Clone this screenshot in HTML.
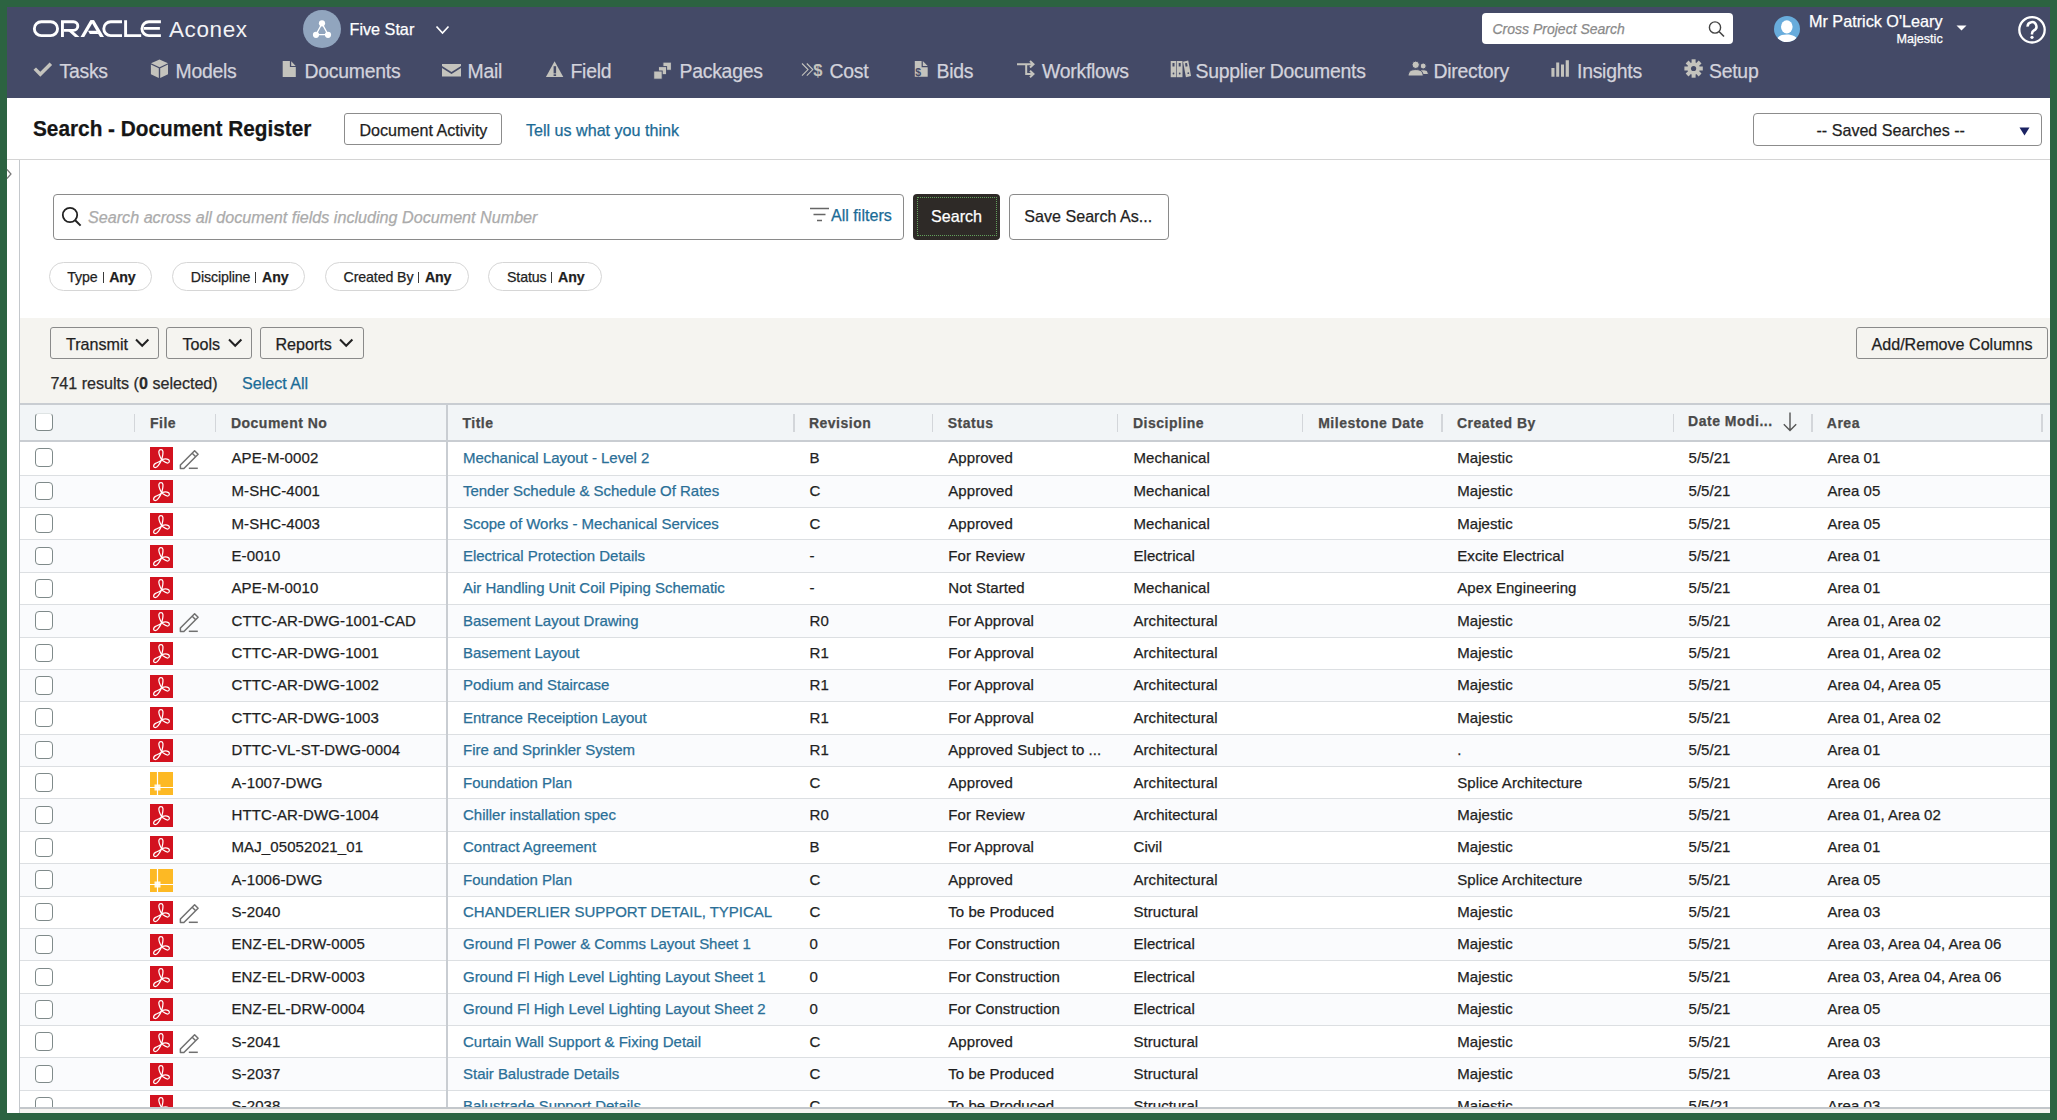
<!DOCTYPE html>
<html><head><meta charset="utf-8"><title>Search - Document Register</title>
<style>
html,body{margin:0;padding:0;}
body{width:2057px;height:1120px;overflow:hidden;position:relative;background:#2c6341;font-family:"Liberation Sans", sans-serif;}
.t{position:absolute;line-height:1;white-space:nowrap;-webkit-text-stroke:0.25px currentColor;}
.r{position:absolute;box-sizing:border-box;}
svg{position:absolute;overflow:visible;}
</style></head>
<body>
<div class="r" style="left:7px;top:7px;width:2043px;height:1106px;background:#ffffff;"></div>
<div class="r" style="left:7px;top:7px;width:2043px;height:91px;background:#444a67;"></div>
<svg style="left:0;top:0" width="300" height="50" viewBox="0 0 300 50">
<g fill="none" stroke="#fff" stroke-width="2.9">
<rect x="34.35" y="21.75" width="23.2" height="13.9" rx="6.95" ry="6.95"/>
<path d="M62.45 37.1V21.75H73.5A4.3 4.3 0 0 1 73.5 30.35H64"/>
<path d="M122 21.75H110.75A6.95 6.95 0 0 0 110.75 35.65H122"/>
<path d="M125.6 20.3V35.65H141.2"/>
<path d="M160.9 21.75H148.9A6.95 6.95 0 0 0 148.9 35.65H160.9M143.9 28.4H159.9"/>
</g>
<g fill="#fff">
<path d="M66 28.9H70.5L79.5 37.1H75Z"/>
<path d="M90.3 20.3H94.1L84.2 37.1H80.5Z"/>
<path d="M90.3 20.3H94.1L104 37.1H100Z"/>
<path d="M88 30.7H96.7L98.7 34H89.8Z"/>
</g></svg>
<div class="t" style="left:169.0px;top:19.00px;font-size:22.5px;color:#f2f2f6;font-weight:400;font-style:normal;letter-spacing:0.6px;-webkit-text-stroke:0;">Aconex</div>
<div class="r" style="left:303px;top:9.5px;width:38px;height:38px;background:#91a5be;border-radius:50%;"></div>
<svg style="left:303px;top:9.5px" width="38" height="38" viewBox="0 0 38 38">
<g stroke="#fff" stroke-width="1.3" fill="none"><path d="M19 13.5L13 24.7H25Z"/></g>
<g fill="#fff"><circle cx="19" cy="13.3" r="3.1"/><circle cx="13" cy="24.8" r="3.1"/><circle cx="25" cy="24.8" r="3.1"/></g>
</svg><div class="t" style="left:349.5px;top:21.00px;font-size:16.2px;color:#ffffff;font-weight:400;font-style:normal;letter-spacing:0px;">Five Star</div>
<svg style="left:435px;top:25px" width="16" height="10" viewBox="0 0 16 10"><path d="M1.5 1.5L7.5 8L13.5 1.5" fill="none" stroke="#fff" stroke-width="1.7"/></svg>
<div class="r" style="left:1482px;top:13px;width:251px;height:31px;background:#fff;border-radius:4px;"></div>
<div class="t" style="left:1492.5px;top:22.00px;font-size:14px;color:#8a8a8a;font-weight:400;font-style:italic;letter-spacing:0px;">Cross Project Search</div>
<svg style="left:1707px;top:19px" width="20" height="20" viewBox="0 0 20 20"><circle cx="8" cy="8.5" r="5.6" fill="none" stroke="#444" stroke-width="1.4"/><path d="M12 12.5L17 17.5" stroke="#444" stroke-width="1.6"/></svg>
<div class="r" style="left:1774px;top:15.5px;width:26px;height:26px;background:#68acdc;border-radius:50%;overflow:hidden;"></div>
<svg style="left:1774px;top:15.5px" width="26" height="26" viewBox="0 0 26 26"><defs><clipPath id="uc"><circle cx="13" cy="13" r="13"/></clipPath></defs><g clip-path="url(#uc)" fill="#fff"><ellipse cx="12.8" cy="10.8" rx="5.8" ry="6.6"/><path d="M1.5 26C2.5 20.5 7 18.6 12.8 18.6S23.5 20.5 24.5 26Z"/></g></svg>
<div class="t" style="left:1809.0px;top:13.00px;font-size:16.2px;color:#ffffff;font-weight:400;font-style:normal;letter-spacing:0px;">Mr Patrick O'Leary</div>
<div class="t" style="left:1896.5px;top:33.00px;font-size:12.6px;color:#ffffff;font-weight:400;font-style:normal;letter-spacing:0px;">Majestic</div>
<svg style="left:1956px;top:25px" width="11" height="6" viewBox="0 0 11 6"><path d="M0.5 0.5H10.5L5.5 5.5Z" fill="#fff"/></svg>
<svg style="left:2017px;top:14.5px" width="30" height="30" viewBox="0 0 30 30"><circle cx="15" cy="14.8" r="12.7" fill="none" stroke="#fff" stroke-width="2.3"/><path d="M10.6 11.6a4.4 4.4 0 1 1 6.4 3.8c-1.4.8-2 1.6-2 3.2v.8" fill="none" stroke="#fff" stroke-width="2.5"/><circle cx="15" cy="22.3" r="1.6" fill="#fff"/></svg>
<div class="t" style="left:59.5px;top:62.00px;font-size:19.4px;color:#d3d3dc;font-weight:400;font-style:normal;letter-spacing:-0.25px;">Tasks</div>
<div class="t" style="left:175.5px;top:62.00px;font-size:19.4px;color:#d3d3dc;font-weight:400;font-style:normal;letter-spacing:-0.25px;">Models</div>
<div class="t" style="left:304.5px;top:62.00px;font-size:19.4px;color:#d3d3dc;font-weight:400;font-style:normal;letter-spacing:-0.25px;">Documents</div>
<div class="t" style="left:467.5px;top:62.00px;font-size:19.4px;color:#d3d3dc;font-weight:400;font-style:normal;letter-spacing:-0.25px;">Mail</div>
<div class="t" style="left:570.5px;top:62.00px;font-size:19.4px;color:#d3d3dc;font-weight:400;font-style:normal;letter-spacing:-0.25px;">Field</div>
<div class="t" style="left:679.5px;top:62.00px;font-size:19.4px;color:#d3d3dc;font-weight:400;font-style:normal;letter-spacing:-0.25px;">Packages</div>
<div class="t" style="left:829.5px;top:62.00px;font-size:19.4px;color:#d3d3dc;font-weight:400;font-style:normal;letter-spacing:-0.25px;">Cost</div>
<div class="t" style="left:936.5px;top:62.00px;font-size:19.4px;color:#d3d3dc;font-weight:400;font-style:normal;letter-spacing:-0.25px;">Bids</div>
<div class="t" style="left:1042.0px;top:62.00px;font-size:19.4px;color:#d3d3dc;font-weight:400;font-style:normal;letter-spacing:-0.25px;">Workflows</div>
<div class="t" style="left:1195.5px;top:62.00px;font-size:19.4px;color:#d3d3dc;font-weight:400;font-style:normal;letter-spacing:-0.25px;">Supplier Documents</div>
<div class="t" style="left:1433.5px;top:62.00px;font-size:19.4px;color:#d3d3dc;font-weight:400;font-style:normal;letter-spacing:-0.25px;">Directory</div>
<div class="t" style="left:1577.0px;top:62.00px;font-size:19.4px;color:#d3d3dc;font-weight:400;font-style:normal;letter-spacing:-0.25px;">Insights</div>
<div class="t" style="left:1709.0px;top:62.00px;font-size:19.4px;color:#d3d3dc;font-weight:400;font-style:normal;letter-spacing:-0.25px;">Setup</div>

<svg style="left:0;top:0" width="2057" height="98" viewBox="0 0 2057 98">
<g fill="#c4c3bd" stroke="none">
<path d="M33.5 69.8L36 67.4L40.3 71.7L49.6 62.4L52.1 64.9L40.3 76.7Z"/>
<path d="M159.5 59.4L168 63.3L159.5 67.2L151 63.3Z"/>
<path d="M150.9 64.5L158.8 68.3V78L150.9 74.2Z"/>
<path d="M160.2 68.3L168 64.5V74.2L160.2 78Z"/>
<path d="M282.7 61H289.9V66.9H295.8V77H282.7Z"/><path d="M291.2 61.3L295.7 65.9H291.2Z"/>
<path d="M442 64H461V66L451.5 72L442 66Z"/>
<path d="M442 68L451.5 74L461 68V76.5H442Z"/>
<path d="M554.6 61.3L563.3 76.9H545.9Z"/>
<path d="M914.8 61.1H921.6V67.2H927.7V76.8H914.8Z"/>
<path d="M922.8 61.1L927.7 66H922.8Z"/>
<path d="M1551.4 68.1H1554.5V76.7H1551.4ZM1556.2 62.4H1559.2V76.7H1556.2ZM1561 64.6H1564V76.7H1561ZM1565.7 60.2H1568.9V76.7H1565.7Z"/>
</g>
<g fill="#444a67"><rect x="553.6" y="66.2" width="2.5" height="7.2"/><rect x="553.6" y="74.3" width="2.5" height="1.7"/></g>
<g fill="#c4c3bd" stroke="#444a67" stroke-width="1">
<rect x="662.9" y="62.1" width="8.5" height="8.2"/>
<rect x="658.4" y="66.6" width="8.2" height="8.1"/>
<rect x="653.7" y="71" width="8.5" height="8.2"/>
<circle cx="1423.2" cy="66" r="3"/><path d="M1417.5 74.5C1418 70.5 1420.5 69.8 1423.2 69.8S1428 70.5 1428.4 74.5Z"/>
<circle cx="1415.7" cy="64.8" r="3.7"/><path d="M1408 76C1408.5 71 1411 69.6 1415.7 69.6S1422.8 71 1423.3 76Z"/>
</g>
<g fill="#c4c3bd">
<rect x="1170.7" y="61" width="5.6" height="16.2"/>
<rect x="1176.9" y="61" width="5.6" height="16.2"/>
<path d="M1183 61.8L1188.2 60.6L1191.1 76L1185.9 77.2Z"/>
</g>
<g fill="#444a67">
<rect x="1172.5" y="63" width="2" height="3.5"/><rect x="1178.7" y="63" width="2" height="3.5"/><path d="M1185 63.3L1187 62.9L1187.6 66.3L1185.6 66.7Z"/>
<circle cx="1173.5" cy="73.5" r="0.9"/><circle cx="1179.7" cy="73.5" r="0.9"/><circle cx="1188.3" cy="73.2" r="0.9"/>
</g>
<g fill="none" stroke="#c4c3bd">
<path d="M802 63.5L808 69.6L802 75.7M806.8 63.5L812.8 69.6L806.8 75.7" stroke-width="1.1"/>
<path d="M1017 64.3H1033M1026.2 64.3V74H1033M1030 61L1033.5 64.3L1030 67.6M1030 70.7L1033.5 74L1030 77.3" stroke-width="2"/>
</g>
<text x="813.2" y="75.8" font-family="Liberation Sans" font-weight="700" font-size="16.5" fill="#c4c3bd">$</text>
<text x="915.3" y="75.6" font-family="Liberation Sans" font-weight="700" font-size="10.5" fill="#444a67">$</text>
<g transform="translate(1693.6 68.5)" fill="#c4c3bd">
<circle r="6.2"/>
<rect x="-2" y="-9.2" width="4" height="4"/><rect x="-2" y="5.2" width="4" height="4"/><rect x="-9.2" y="-2" width="4" height="4"/><rect x="5.2" y="-2" width="4" height="4"/>
<g transform="rotate(45)"><rect x="-2" y="-9.2" width="4" height="4"/><rect x="-2" y="5.2" width="4" height="4"/><rect x="-9.2" y="-2" width="4" height="4"/><rect x="5.2" y="-2" width="4" height="4"/></g>
<circle r="2.6" fill="#444a67"/>
</g>
</svg>
<div class="r" style="left:7px;top:159px;width:2043px;height:1px;background:#d4d4d4;"></div>
<div class="t" style="left:33.3px;top:118.00px;font-size:22.5px;color:#161616;font-weight:700;font-style:normal;letter-spacing:0px;transform:scaleX(0.924);transform-origin:0 0;">Search - Document Register</div>
<div class="r" style="left:344px;top:113px;width:158px;height:32px;border:1.3px solid #8c8c8c;border-radius:3px;background:#fff;"></div>
<div class="t" style="left:359.5px;top:122.00px;font-size:16.1px;color:#1f1f1f;font-weight:400;font-style:normal;letter-spacing:0px;">Document Activity</div>
<div class="t" style="left:526.0px;top:122.00px;font-size:16.1px;color:#1b6b96;font-weight:400;font-style:normal;letter-spacing:0px;">Tell us what you think</div>
<div class="r" style="left:1753px;top:113px;width:289px;height:33px;border:1.4px solid #8c8c8c;border-radius:4px;background:#fff;"></div>
<div class="t" style="left:1816.5px;top:122.00px;font-size:16.1px;color:#1f1f1f;font-weight:400;font-style:normal;letter-spacing:0px;">-- Saved Searches --</div>
<svg style="left:2019px;top:127px" width="11" height="9" viewBox="0 0 11 9"><path d="M0.5 0.5H10.5L5.5 8.5Z" fill="#1b2363"/></svg>
<div class="r" style="left:19px;top:160px;width:1.3px;height:953px;background:#c4c8cc;"></div>
<svg style="left:7px;top:168px" width="6" height="12" viewBox="0 0 6 12"><path d="M0 1.5L4 6L0 10.5" fill="none" stroke="#777" stroke-width="1.2"/></svg>
<div class="r" style="left:53px;top:193.5px;width:851px;height:46px;border:1.5px solid #8a8a8a;border-radius:4px;background:#fff;"></div>
<svg style="left:60px;top:205px" width="24" height="24" viewBox="0 0 24 24"><circle cx="10" cy="10" r="7.2" fill="none" stroke="#222" stroke-width="1.8"/><path d="M15.2 15.2L20.6 20.6" stroke="#222" stroke-width="2"/></svg>
<div class="t" style="left:88.0px;top:209.00px;font-size:16.15px;color:#ababab;font-weight:400;font-style:italic;letter-spacing:0px;">Search across all document fields including Document Number</div>
<svg style="left:809px;top:207px" width="22" height="16" viewBox="0 0 22 16"><path d="M1 1.5H20M4.5 7.5H16.5M8 13.5H13" fill="none" stroke="#666" stroke-width="1.3"/></svg>
<div class="t" style="left:831.0px;top:207.00px;font-size:16.1px;color:#1b6b96;font-weight:400;font-style:normal;letter-spacing:0px;">All filters</div>
<div class="r" style="left:913px;top:193.5px;width:87px;height:46px;background:#2e2a27;border-radius:4px;"></div>
<div class="r" style="left:916.5px;top:197px;width:80px;height:39px;border:1.2px dotted #62a05c;"></div>
<div class="t" style="left:931.0px;top:208.00px;font-size:16.1px;color:#ffffff;font-weight:400;font-style:normal;letter-spacing:0px;">Search</div>
<div class="r" style="left:1008.5px;top:193.5px;width:160px;height:46px;border:1.5px solid #8a8a8a;border-radius:4px;background:#fff;"></div>
<div class="t" style="left:1024.3px;top:208.00px;font-size:16.1px;color:#1f1f1f;font-weight:400;font-style:normal;letter-spacing:0px;">Save Search As...</div>
<div class="r" style="left:49.3px;top:261.5px;width:103px;height:29px;border:1.5px solid #d6d6d6;border-radius:15px;background:#fff;"></div>
<div class="r" style="left:172px;top:261.5px;width:133px;height:29px;border:1.5px solid #d6d6d6;border-radius:15px;background:#fff;"></div>
<div class="r" style="left:324.7px;top:261.5px;width:144px;height:29px;border:1.5px solid #d6d6d6;border-radius:15px;background:#fff;"></div>
<div class="r" style="left:488.3px;top:261.5px;width:114px;height:29px;border:1.5px solid #d6d6d6;border-radius:15px;background:#fff;"></div>
<div class="t" style="left:67.3px;top:270.00px;font-size:14.2px;color:#1f1f1f;font-weight:400;font-style:normal;letter-spacing:-0.12px;">Type</div>
<div class="r" style="left:103px;top:272px;width:1.2px;height:10.5px;background:#3a3a3a;"></div>
<div class="t" style="left:109.2px;top:270.00px;font-size:14.2px;color:#1f1f1f;font-weight:400;font-style:normal;letter-spacing:-0.12px;"><b>Any</b></div>
<div class="t" style="left:190.8px;top:270.00px;font-size:14.2px;color:#1f1f1f;font-weight:400;font-style:normal;letter-spacing:-0.12px;">Discipline</div>
<div class="r" style="left:255px;top:272px;width:1.2px;height:10.5px;background:#3a3a3a;"></div>
<div class="t" style="left:262.0px;top:270.00px;font-size:14.2px;color:#1f1f1f;font-weight:400;font-style:normal;letter-spacing:-0.12px;"><b>Any</b></div>
<div class="t" style="left:343.6px;top:270.00px;font-size:14.2px;color:#1f1f1f;font-weight:400;font-style:normal;letter-spacing:-0.12px;">Created By</div>
<div class="r" style="left:418px;top:272px;width:1.2px;height:10.5px;background:#3a3a3a;"></div>
<div class="t" style="left:424.9px;top:270.00px;font-size:14.2px;color:#1f1f1f;font-weight:400;font-style:normal;letter-spacing:-0.12px;"><b>Any</b></div>
<div class="t" style="left:507.0px;top:270.00px;font-size:14.2px;color:#1f1f1f;font-weight:400;font-style:normal;letter-spacing:-0.12px;">Status</div>
<div class="r" style="left:551px;top:272px;width:1.2px;height:10.5px;background:#3a3a3a;"></div>
<div class="t" style="left:558.0px;top:270.00px;font-size:14.2px;color:#1f1f1f;font-weight:400;font-style:normal;letter-spacing:-0.12px;"><b>Any</b></div>
<div class="r" style="left:20px;top:318px;width:2030px;height:85px;background:#f5f4f0;"></div>
<div class="r" style="left:50.4px;top:327px;width:109px;height:32.3px;border:1.4px solid #8a8a8a;border-radius:3px;"></div>
<div class="t" style="left:66.0px;top:336.00px;font-size:16.1px;color:#1f1f1f;font-weight:400;font-style:normal;letter-spacing:0px;">Transmit</div>
<svg style="left:134.5px;top:338px" width="15" height="10" viewBox="0 0 15 10"><path d="M1 1.5L7.2 7.8L13.4 1.5" fill="none" stroke="#222" stroke-width="2"/></svg>
<div class="r" style="left:166.3px;top:327px;width:86px;height:32.3px;border:1.4px solid #8a8a8a;border-radius:3px;"></div>
<div class="t" style="left:182.5px;top:336.00px;font-size:16.1px;color:#1f1f1f;font-weight:400;font-style:normal;letter-spacing:0px;">Tools</div>
<svg style="left:228.3px;top:338px" width="15" height="10" viewBox="0 0 15 10"><path d="M1 1.5L7.2 7.8L13.4 1.5" fill="none" stroke="#222" stroke-width="2"/></svg>
<div class="r" style="left:260.4px;top:327px;width:103.3px;height:32.3px;border:1.4px solid #8a8a8a;border-radius:3px;"></div>
<div class="t" style="left:275.5px;top:336.00px;font-size:16.1px;color:#1f1f1f;font-weight:400;font-style:normal;letter-spacing:0px;">Reports</div>
<svg style="left:338.8px;top:338px" width="15" height="10" viewBox="0 0 15 10"><path d="M1 1.5L7.2 7.8L13.4 1.5" fill="none" stroke="#222" stroke-width="2"/></svg>
<div class="r" style="left:1856px;top:327px;width:191.6px;height:32.3px;border:1.4px solid #8a8a8a;border-radius:3px;"></div>
<div class="t" style="left:1871.5px;top:336.00px;font-size:16.1px;color:#1f1f1f;font-weight:400;font-style:normal;letter-spacing:0px;">Add/Remove Columns</div>
<div class="t" style="left:50.4px;top:375.00px;font-size:16.1px;color:#2a2a2a;font-weight:400;font-style:normal;letter-spacing:0px;">741 results (<b>0</b> selected)</div>
<div class="t" style="left:242.0px;top:375.00px;font-size:16.1px;color:#1b6b96;font-weight:400;font-style:normal;letter-spacing:0px;">Select All</div>
<div class="r" style="left:20px;top:403px;width:2030px;height:2px;background:#c9cdd2;"></div>
<div class="r" style="left:20px;top:405px;width:2030px;height:35px;background:#f2f5f7;"></div>
<div class="r" style="left:20px;top:440px;width:2030px;height:2px;background:#c9cdd2;"></div>
<div class="t" style="left:150.0px;top:416.00px;font-size:14px;color:#4a4a4a;font-weight:700;font-style:normal;letter-spacing:0.5px;">File</div>
<div class="t" style="left:230.9px;top:416.00px;font-size:14px;color:#4a4a4a;font-weight:700;font-style:normal;letter-spacing:0.5px;">Document No</div>
<div class="t" style="left:462.5px;top:416.00px;font-size:14px;color:#4a4a4a;font-weight:700;font-style:normal;letter-spacing:0.5px;">Title</div>
<div class="t" style="left:808.9px;top:416.00px;font-size:14px;color:#4a4a4a;font-weight:700;font-style:normal;letter-spacing:0.5px;">Revision</div>
<div class="t" style="left:947.7px;top:416.00px;font-size:14px;color:#4a4a4a;font-weight:700;font-style:normal;letter-spacing:0.5px;">Status</div>
<div class="t" style="left:1133.0px;top:416.00px;font-size:14px;color:#4a4a4a;font-weight:700;font-style:normal;letter-spacing:0.5px;">Discipline</div>
<div class="t" style="left:1318.2px;top:416.00px;font-size:14px;color:#4a4a4a;font-weight:700;font-style:normal;letter-spacing:0.5px;">Milestone Date</div>
<div class="t" style="left:1456.9px;top:416.00px;font-size:14px;color:#4a4a4a;font-weight:700;font-style:normal;letter-spacing:0.5px;">Created By</div>
<div class="t" style="left:1688.1px;top:414.00px;font-size:14px;color:#4a4a4a;font-weight:700;font-style:normal;letter-spacing:0.5px;">Date Modi...</div>
<div class="t" style="left:1826.8px;top:416.00px;font-size:14px;color:#4a4a4a;font-weight:700;font-style:normal;letter-spacing:0.5px;">Area</div>
<div class="r" style="left:134.20000000000002px;top:413.5px;width:1.2px;height:18px;background:#d3d6da;"></div>
<div class="r" style="left:214.70000000000002px;top:413.5px;width:1.2px;height:18px;background:#d3d6da;"></div>
<div class="r" style="left:793.4px;top:413.5px;width:1.2px;height:18px;background:#d3d6da;"></div>
<div class="r" style="left:932.0px;top:413.5px;width:1.2px;height:18px;background:#d3d6da;"></div>
<div class="r" style="left:1117.1000000000001px;top:413.5px;width:1.2px;height:18px;background:#d3d6da;"></div>
<div class="r" style="left:1301.8000000000002px;top:413.5px;width:1.2px;height:18px;background:#d3d6da;"></div>
<div class="r" style="left:1441.4px;top:413.5px;width:1.2px;height:18px;background:#d3d6da;"></div>
<div class="r" style="left:1672.7px;top:413.5px;width:1.2px;height:18px;background:#d3d6da;"></div>
<div class="r" style="left:1811.4px;top:413.5px;width:1.2px;height:18px;background:#d3d6da;"></div>
<div class="r" style="left:2041.4px;top:413.5px;width:1.2px;height:18px;background:#d3d6da;"></div>
<div class="r" style="left:34.6px;top:412.5px;width:18.4px;height:18px;border:1.6px solid #7f8a8a;border-top-color:#dfe4e4;border-radius:4px;background:#fff;"></div>
<svg style="left:1782px;top:412px" width="16" height="20" viewBox="0 0 16 20"><path d="M8 0.5V18.5M1.8 12.3L8 18.5L14.2 12.3" fill="none" stroke="#555" stroke-width="1.4"/></svg>
<div class="r" style="left:20px;top:442.00px;width:2030px;height:33.65px;background:#ffffff;border-bottom:1px solid #dcdfe2;"></div>
<div class="r" style="left:35px;top:448.20px;width:18.2px;height:18.6px;border:1.6px solid #7f8a8a;border-radius:4px;background:#fff;"></div>
<svg style="left:150px;top:446.60px" width="23" height="23" viewBox="0 0 23 23"><rect width="23" height="23" fill="#d3121f"/><path d="M11.6 12.8C10.4 10.5 8.5 6.5 8.9 4.3C9.3 2.3 12.5 2.1 12.9 4.3C13.3 6.5 12.4 10 11.6 12.8C14 11.8 17 11.8 18.4 12.6C19.8 13.4 19.6 15.6 18 16C16.2 16.4 13.6 14.2 11.6 12.8C10 14.6 7.8 15.2 5.6 16.4C3.4 17.6 3.2 19.6 4.2 20.2C5.2 20.8 7.2 20 8.4 18.4C9.6 16.8 10.8 14.8 11.6 12.8Z" fill="none" stroke="#fff" stroke-width="1.25" stroke-linejoin="round"/></svg>
<svg style="left:178px;top:447.80px" width="22" height="22" viewBox="0 0 22 22"><path d="M2.4 20.5L2.4 17L16.6 2.8L20.1 6.3L5.9 20.5ZM14.2 5.2L17.7 8.7" fill="none" stroke="#707070" stroke-width="1.5" stroke-linejoin="round"/><path d="M10.8 20.3H19.8" stroke="#707070" stroke-width="1.5"/></svg>
<div class="t" style="left:231.5px;top:450.00px;font-size:15px;color:#1f1f1f;font-weight:400;font-style:normal;letter-spacing:0.1px;">APE-M-0002</div>
<div class="t" style="left:463.0px;top:450.00px;font-size:15px;color:#2a6f97;font-weight:400;font-style:normal;letter-spacing:-0.02px;">Mechanical Layout - Level 2</div>
<div class="t" style="left:809.5px;top:450.00px;font-size:15px;color:#1f1f1f;font-weight:400;font-style:normal;letter-spacing:0.05px;">B</div>
<div class="t" style="left:948.3px;top:450.00px;font-size:15px;color:#1f1f1f;font-weight:400;font-style:normal;letter-spacing:0.05px;">Approved</div>
<div class="t" style="left:1133.5px;top:450.00px;font-size:15px;color:#1f1f1f;font-weight:400;font-style:normal;letter-spacing:0.05px;">Mechanical</div>
<div class="t" style="left:1457.3px;top:450.00px;font-size:15px;color:#1f1f1f;font-weight:400;font-style:normal;letter-spacing:0.05px;">Majestic</div>
<div class="t" style="left:1688.5px;top:450.00px;font-size:15px;color:#1f1f1f;font-weight:400;font-style:normal;letter-spacing:0.05px;">5/5/21</div>
<div class="t" style="left:1827.5px;top:450.00px;font-size:15px;color:#1f1f1f;font-weight:400;font-style:normal;letter-spacing:0.05px;">Area 01</div>
<div class="r" style="left:20px;top:475.65px;width:2030px;height:32.38px;background:#fafbfd;border-bottom:1px solid #dcdfe2;"></div>
<div class="r" style="left:35px;top:481.83px;width:18.2px;height:18.6px;border:1.6px solid #7f8a8a;border-radius:4px;background:#fff;"></div>
<svg style="left:150px;top:480.23px" width="23" height="23" viewBox="0 0 23 23"><rect width="23" height="23" fill="#d3121f"/><path d="M11.6 12.8C10.4 10.5 8.5 6.5 8.9 4.3C9.3 2.3 12.5 2.1 12.9 4.3C13.3 6.5 12.4 10 11.6 12.8C14 11.8 17 11.8 18.4 12.6C19.8 13.4 19.6 15.6 18 16C16.2 16.4 13.6 14.2 11.6 12.8C10 14.6 7.8 15.2 5.6 16.4C3.4 17.6 3.2 19.6 4.2 20.2C5.2 20.8 7.2 20 8.4 18.4C9.6 16.8 10.8 14.8 11.6 12.8Z" fill="none" stroke="#fff" stroke-width="1.25" stroke-linejoin="round"/></svg>
<div class="t" style="left:231.5px;top:483.00px;font-size:15px;color:#1f1f1f;font-weight:400;font-style:normal;letter-spacing:0.1px;">M-SHC-4001</div>
<div class="t" style="left:463.0px;top:483.00px;font-size:15px;color:#2a6f97;font-weight:400;font-style:normal;letter-spacing:-0.02px;">Tender Schedule &amp; Schedule Of Rates</div>
<div class="t" style="left:809.5px;top:483.00px;font-size:15px;color:#1f1f1f;font-weight:400;font-style:normal;letter-spacing:0.05px;">C</div>
<div class="t" style="left:948.3px;top:483.00px;font-size:15px;color:#1f1f1f;font-weight:400;font-style:normal;letter-spacing:0.05px;">Approved</div>
<div class="t" style="left:1133.5px;top:483.00px;font-size:15px;color:#1f1f1f;font-weight:400;font-style:normal;letter-spacing:0.05px;">Mechanical</div>
<div class="t" style="left:1457.3px;top:483.00px;font-size:15px;color:#1f1f1f;font-weight:400;font-style:normal;letter-spacing:0.05px;">Majestic</div>
<div class="t" style="left:1688.5px;top:483.00px;font-size:15px;color:#1f1f1f;font-weight:400;font-style:normal;letter-spacing:0.05px;">5/5/21</div>
<div class="t" style="left:1827.5px;top:483.00px;font-size:15px;color:#1f1f1f;font-weight:400;font-style:normal;letter-spacing:0.05px;">Area 05</div>
<div class="r" style="left:20px;top:508.03px;width:2030px;height:32.38px;background:#ffffff;border-bottom:1px solid #dcdfe2;"></div>
<div class="r" style="left:35px;top:514.21px;width:18.2px;height:18.6px;border:1.6px solid #7f8a8a;border-radius:4px;background:#fff;"></div>
<svg style="left:150px;top:512.61px" width="23" height="23" viewBox="0 0 23 23"><rect width="23" height="23" fill="#d3121f"/><path d="M11.6 12.8C10.4 10.5 8.5 6.5 8.9 4.3C9.3 2.3 12.5 2.1 12.9 4.3C13.3 6.5 12.4 10 11.6 12.8C14 11.8 17 11.8 18.4 12.6C19.8 13.4 19.6 15.6 18 16C16.2 16.4 13.6 14.2 11.6 12.8C10 14.6 7.8 15.2 5.6 16.4C3.4 17.6 3.2 19.6 4.2 20.2C5.2 20.8 7.2 20 8.4 18.4C9.6 16.8 10.8 14.8 11.6 12.8Z" fill="none" stroke="#fff" stroke-width="1.25" stroke-linejoin="round"/></svg>
<div class="t" style="left:231.5px;top:516.00px;font-size:15px;color:#1f1f1f;font-weight:400;font-style:normal;letter-spacing:0.1px;">M-SHC-4003</div>
<div class="t" style="left:463.0px;top:516.00px;font-size:15px;color:#2a6f97;font-weight:400;font-style:normal;letter-spacing:-0.02px;">Scope of Works - Mechanical Services</div>
<div class="t" style="left:809.5px;top:516.00px;font-size:15px;color:#1f1f1f;font-weight:400;font-style:normal;letter-spacing:0.05px;">C</div>
<div class="t" style="left:948.3px;top:516.00px;font-size:15px;color:#1f1f1f;font-weight:400;font-style:normal;letter-spacing:0.05px;">Approved</div>
<div class="t" style="left:1133.5px;top:516.00px;font-size:15px;color:#1f1f1f;font-weight:400;font-style:normal;letter-spacing:0.05px;">Mechanical</div>
<div class="t" style="left:1457.3px;top:516.00px;font-size:15px;color:#1f1f1f;font-weight:400;font-style:normal;letter-spacing:0.05px;">Majestic</div>
<div class="t" style="left:1688.5px;top:516.00px;font-size:15px;color:#1f1f1f;font-weight:400;font-style:normal;letter-spacing:0.05px;">5/5/21</div>
<div class="t" style="left:1827.5px;top:516.00px;font-size:15px;color:#1f1f1f;font-weight:400;font-style:normal;letter-spacing:0.05px;">Area 05</div>
<div class="r" style="left:20px;top:540.41px;width:2030px;height:32.38px;background:#fafbfd;border-bottom:1px solid #dcdfe2;"></div>
<div class="r" style="left:35px;top:546.59px;width:18.2px;height:18.6px;border:1.6px solid #7f8a8a;border-radius:4px;background:#fff;"></div>
<svg style="left:150px;top:544.99px" width="23" height="23" viewBox="0 0 23 23"><rect width="23" height="23" fill="#d3121f"/><path d="M11.6 12.8C10.4 10.5 8.5 6.5 8.9 4.3C9.3 2.3 12.5 2.1 12.9 4.3C13.3 6.5 12.4 10 11.6 12.8C14 11.8 17 11.8 18.4 12.6C19.8 13.4 19.6 15.6 18 16C16.2 16.4 13.6 14.2 11.6 12.8C10 14.6 7.8 15.2 5.6 16.4C3.4 17.6 3.2 19.6 4.2 20.2C5.2 20.8 7.2 20 8.4 18.4C9.6 16.8 10.8 14.8 11.6 12.8Z" fill="none" stroke="#fff" stroke-width="1.25" stroke-linejoin="round"/></svg>
<div class="t" style="left:231.5px;top:548.00px;font-size:15px;color:#1f1f1f;font-weight:400;font-style:normal;letter-spacing:0.1px;">E-0010</div>
<div class="t" style="left:463.0px;top:548.00px;font-size:15px;color:#2a6f97;font-weight:400;font-style:normal;letter-spacing:-0.02px;">Electrical Protection Details</div>
<div class="t" style="left:809.5px;top:548.00px;font-size:15px;color:#1f1f1f;font-weight:400;font-style:normal;letter-spacing:0.05px;">-</div>
<div class="t" style="left:948.3px;top:548.00px;font-size:15px;color:#1f1f1f;font-weight:400;font-style:normal;letter-spacing:0.05px;">For Review</div>
<div class="t" style="left:1133.5px;top:548.00px;font-size:15px;color:#1f1f1f;font-weight:400;font-style:normal;letter-spacing:0.05px;">Electrical</div>
<div class="t" style="left:1457.3px;top:548.00px;font-size:15px;color:#1f1f1f;font-weight:400;font-style:normal;letter-spacing:0.05px;">Excite Electrical</div>
<div class="t" style="left:1688.5px;top:548.00px;font-size:15px;color:#1f1f1f;font-weight:400;font-style:normal;letter-spacing:0.05px;">5/5/21</div>
<div class="t" style="left:1827.5px;top:548.00px;font-size:15px;color:#1f1f1f;font-weight:400;font-style:normal;letter-spacing:0.05px;">Area 01</div>
<div class="r" style="left:20px;top:572.79px;width:2030px;height:32.38px;background:#ffffff;border-bottom:1px solid #dcdfe2;"></div>
<div class="r" style="left:35px;top:578.97px;width:18.2px;height:18.6px;border:1.6px solid #7f8a8a;border-radius:4px;background:#fff;"></div>
<svg style="left:150px;top:577.37px" width="23" height="23" viewBox="0 0 23 23"><rect width="23" height="23" fill="#d3121f"/><path d="M11.6 12.8C10.4 10.5 8.5 6.5 8.9 4.3C9.3 2.3 12.5 2.1 12.9 4.3C13.3 6.5 12.4 10 11.6 12.8C14 11.8 17 11.8 18.4 12.6C19.8 13.4 19.6 15.6 18 16C16.2 16.4 13.6 14.2 11.6 12.8C10 14.6 7.8 15.2 5.6 16.4C3.4 17.6 3.2 19.6 4.2 20.2C5.2 20.8 7.2 20 8.4 18.4C9.6 16.8 10.8 14.8 11.6 12.8Z" fill="none" stroke="#fff" stroke-width="1.25" stroke-linejoin="round"/></svg>
<div class="t" style="left:231.5px;top:580.00px;font-size:15px;color:#1f1f1f;font-weight:400;font-style:normal;letter-spacing:0.1px;">APE-M-0010</div>
<div class="t" style="left:463.0px;top:580.00px;font-size:15px;color:#2a6f97;font-weight:400;font-style:normal;letter-spacing:-0.02px;">Air Handling Unit Coil Piping Schematic</div>
<div class="t" style="left:809.5px;top:580.00px;font-size:15px;color:#1f1f1f;font-weight:400;font-style:normal;letter-spacing:0.05px;">-</div>
<div class="t" style="left:948.3px;top:580.00px;font-size:15px;color:#1f1f1f;font-weight:400;font-style:normal;letter-spacing:0.05px;">Not Started</div>
<div class="t" style="left:1133.5px;top:580.00px;font-size:15px;color:#1f1f1f;font-weight:400;font-style:normal;letter-spacing:0.05px;">Mechanical</div>
<div class="t" style="left:1457.3px;top:580.00px;font-size:15px;color:#1f1f1f;font-weight:400;font-style:normal;letter-spacing:0.05px;">Apex Engineering</div>
<div class="t" style="left:1688.5px;top:580.00px;font-size:15px;color:#1f1f1f;font-weight:400;font-style:normal;letter-spacing:0.05px;">5/5/21</div>
<div class="t" style="left:1827.5px;top:580.00px;font-size:15px;color:#1f1f1f;font-weight:400;font-style:normal;letter-spacing:0.05px;">Area 01</div>
<div class="r" style="left:20px;top:605.17px;width:2030px;height:32.38px;background:#fafbfd;border-bottom:1px solid #dcdfe2;"></div>
<div class="r" style="left:35px;top:611.35px;width:18.2px;height:18.6px;border:1.6px solid #7f8a8a;border-radius:4px;background:#fff;"></div>
<svg style="left:150px;top:609.75px" width="23" height="23" viewBox="0 0 23 23"><rect width="23" height="23" fill="#d3121f"/><path d="M11.6 12.8C10.4 10.5 8.5 6.5 8.9 4.3C9.3 2.3 12.5 2.1 12.9 4.3C13.3 6.5 12.4 10 11.6 12.8C14 11.8 17 11.8 18.4 12.6C19.8 13.4 19.6 15.6 18 16C16.2 16.4 13.6 14.2 11.6 12.8C10 14.6 7.8 15.2 5.6 16.4C3.4 17.6 3.2 19.6 4.2 20.2C5.2 20.8 7.2 20 8.4 18.4C9.6 16.8 10.8 14.8 11.6 12.8Z" fill="none" stroke="#fff" stroke-width="1.25" stroke-linejoin="round"/></svg>
<svg style="left:178px;top:610.95px" width="22" height="22" viewBox="0 0 22 22"><path d="M2.4 20.5L2.4 17L16.6 2.8L20.1 6.3L5.9 20.5ZM14.2 5.2L17.7 8.7" fill="none" stroke="#707070" stroke-width="1.5" stroke-linejoin="round"/><path d="M10.8 20.3H19.8" stroke="#707070" stroke-width="1.5"/></svg>
<div class="t" style="left:231.5px;top:613.00px;font-size:15px;color:#1f1f1f;font-weight:400;font-style:normal;letter-spacing:0.1px;">CTTC-AR-DWG-1001-CAD</div>
<div class="t" style="left:463.0px;top:613.00px;font-size:15px;color:#2a6f97;font-weight:400;font-style:normal;letter-spacing:-0.02px;">Basement Layout Drawing</div>
<div class="t" style="left:809.5px;top:613.00px;font-size:15px;color:#1f1f1f;font-weight:400;font-style:normal;letter-spacing:0.05px;">R0</div>
<div class="t" style="left:948.3px;top:613.00px;font-size:15px;color:#1f1f1f;font-weight:400;font-style:normal;letter-spacing:0.05px;">For Approval</div>
<div class="t" style="left:1133.5px;top:613.00px;font-size:15px;color:#1f1f1f;font-weight:400;font-style:normal;letter-spacing:0.05px;">Architectural</div>
<div class="t" style="left:1457.3px;top:613.00px;font-size:15px;color:#1f1f1f;font-weight:400;font-style:normal;letter-spacing:0.05px;">Majestic</div>
<div class="t" style="left:1688.5px;top:613.00px;font-size:15px;color:#1f1f1f;font-weight:400;font-style:normal;letter-spacing:0.05px;">5/5/21</div>
<div class="t" style="left:1827.5px;top:613.00px;font-size:15px;color:#1f1f1f;font-weight:400;font-style:normal;letter-spacing:0.05px;">Area 01, Area 02</div>
<div class="r" style="left:20px;top:637.55px;width:2030px;height:32.38px;background:#ffffff;border-bottom:1px solid #dcdfe2;"></div>
<div class="r" style="left:35px;top:643.73px;width:18.2px;height:18.6px;border:1.6px solid #7f8a8a;border-radius:4px;background:#fff;"></div>
<svg style="left:150px;top:642.13px" width="23" height="23" viewBox="0 0 23 23"><rect width="23" height="23" fill="#d3121f"/><path d="M11.6 12.8C10.4 10.5 8.5 6.5 8.9 4.3C9.3 2.3 12.5 2.1 12.9 4.3C13.3 6.5 12.4 10 11.6 12.8C14 11.8 17 11.8 18.4 12.6C19.8 13.4 19.6 15.6 18 16C16.2 16.4 13.6 14.2 11.6 12.8C10 14.6 7.8 15.2 5.6 16.4C3.4 17.6 3.2 19.6 4.2 20.2C5.2 20.8 7.2 20 8.4 18.4C9.6 16.8 10.8 14.8 11.6 12.8Z" fill="none" stroke="#fff" stroke-width="1.25" stroke-linejoin="round"/></svg>
<div class="t" style="left:231.5px;top:645.00px;font-size:15px;color:#1f1f1f;font-weight:400;font-style:normal;letter-spacing:0.1px;">CTTC-AR-DWG-1001</div>
<div class="t" style="left:463.0px;top:645.00px;font-size:15px;color:#2a6f97;font-weight:400;font-style:normal;letter-spacing:-0.02px;">Basement Layout</div>
<div class="t" style="left:809.5px;top:645.00px;font-size:15px;color:#1f1f1f;font-weight:400;font-style:normal;letter-spacing:0.05px;">R1</div>
<div class="t" style="left:948.3px;top:645.00px;font-size:15px;color:#1f1f1f;font-weight:400;font-style:normal;letter-spacing:0.05px;">For Approval</div>
<div class="t" style="left:1133.5px;top:645.00px;font-size:15px;color:#1f1f1f;font-weight:400;font-style:normal;letter-spacing:0.05px;">Architectural</div>
<div class="t" style="left:1457.3px;top:645.00px;font-size:15px;color:#1f1f1f;font-weight:400;font-style:normal;letter-spacing:0.05px;">Majestic</div>
<div class="t" style="left:1688.5px;top:645.00px;font-size:15px;color:#1f1f1f;font-weight:400;font-style:normal;letter-spacing:0.05px;">5/5/21</div>
<div class="t" style="left:1827.5px;top:645.00px;font-size:15px;color:#1f1f1f;font-weight:400;font-style:normal;letter-spacing:0.05px;">Area 01, Area 02</div>
<div class="r" style="left:20px;top:669.93px;width:2030px;height:32.38px;background:#fafbfd;border-bottom:1px solid #dcdfe2;"></div>
<div class="r" style="left:35px;top:676.11px;width:18.2px;height:18.6px;border:1.6px solid #7f8a8a;border-radius:4px;background:#fff;"></div>
<svg style="left:150px;top:674.51px" width="23" height="23" viewBox="0 0 23 23"><rect width="23" height="23" fill="#d3121f"/><path d="M11.6 12.8C10.4 10.5 8.5 6.5 8.9 4.3C9.3 2.3 12.5 2.1 12.9 4.3C13.3 6.5 12.4 10 11.6 12.8C14 11.8 17 11.8 18.4 12.6C19.8 13.4 19.6 15.6 18 16C16.2 16.4 13.6 14.2 11.6 12.8C10 14.6 7.8 15.2 5.6 16.4C3.4 17.6 3.2 19.6 4.2 20.2C5.2 20.8 7.2 20 8.4 18.4C9.6 16.8 10.8 14.8 11.6 12.8Z" fill="none" stroke="#fff" stroke-width="1.25" stroke-linejoin="round"/></svg>
<div class="t" style="left:231.5px;top:677.00px;font-size:15px;color:#1f1f1f;font-weight:400;font-style:normal;letter-spacing:0.1px;">CTTC-AR-DWG-1002</div>
<div class="t" style="left:463.0px;top:677.00px;font-size:15px;color:#2a6f97;font-weight:400;font-style:normal;letter-spacing:-0.02px;">Podium and Staircase</div>
<div class="t" style="left:809.5px;top:677.00px;font-size:15px;color:#1f1f1f;font-weight:400;font-style:normal;letter-spacing:0.05px;">R1</div>
<div class="t" style="left:948.3px;top:677.00px;font-size:15px;color:#1f1f1f;font-weight:400;font-style:normal;letter-spacing:0.05px;">For Approval</div>
<div class="t" style="left:1133.5px;top:677.00px;font-size:15px;color:#1f1f1f;font-weight:400;font-style:normal;letter-spacing:0.05px;">Architectural</div>
<div class="t" style="left:1457.3px;top:677.00px;font-size:15px;color:#1f1f1f;font-weight:400;font-style:normal;letter-spacing:0.05px;">Majestic</div>
<div class="t" style="left:1688.5px;top:677.00px;font-size:15px;color:#1f1f1f;font-weight:400;font-style:normal;letter-spacing:0.05px;">5/5/21</div>
<div class="t" style="left:1827.5px;top:677.00px;font-size:15px;color:#1f1f1f;font-weight:400;font-style:normal;letter-spacing:0.05px;">Area 04, Area 05</div>
<div class="r" style="left:20px;top:702.31px;width:2030px;height:32.38px;background:#ffffff;border-bottom:1px solid #dcdfe2;"></div>
<div class="r" style="left:35px;top:708.49px;width:18.2px;height:18.6px;border:1.6px solid #7f8a8a;border-radius:4px;background:#fff;"></div>
<svg style="left:150px;top:706.89px" width="23" height="23" viewBox="0 0 23 23"><rect width="23" height="23" fill="#d3121f"/><path d="M11.6 12.8C10.4 10.5 8.5 6.5 8.9 4.3C9.3 2.3 12.5 2.1 12.9 4.3C13.3 6.5 12.4 10 11.6 12.8C14 11.8 17 11.8 18.4 12.6C19.8 13.4 19.6 15.6 18 16C16.2 16.4 13.6 14.2 11.6 12.8C10 14.6 7.8 15.2 5.6 16.4C3.4 17.6 3.2 19.6 4.2 20.2C5.2 20.8 7.2 20 8.4 18.4C9.6 16.8 10.8 14.8 11.6 12.8Z" fill="none" stroke="#fff" stroke-width="1.25" stroke-linejoin="round"/></svg>
<div class="t" style="left:231.5px;top:710.00px;font-size:15px;color:#1f1f1f;font-weight:400;font-style:normal;letter-spacing:0.1px;">CTTC-AR-DWG-1003</div>
<div class="t" style="left:463.0px;top:710.00px;font-size:15px;color:#2a6f97;font-weight:400;font-style:normal;letter-spacing:-0.02px;">Entrance Receiption Layout</div>
<div class="t" style="left:809.5px;top:710.00px;font-size:15px;color:#1f1f1f;font-weight:400;font-style:normal;letter-spacing:0.05px;">R1</div>
<div class="t" style="left:948.3px;top:710.00px;font-size:15px;color:#1f1f1f;font-weight:400;font-style:normal;letter-spacing:0.05px;">For Approval</div>
<div class="t" style="left:1133.5px;top:710.00px;font-size:15px;color:#1f1f1f;font-weight:400;font-style:normal;letter-spacing:0.05px;">Architectural</div>
<div class="t" style="left:1457.3px;top:710.00px;font-size:15px;color:#1f1f1f;font-weight:400;font-style:normal;letter-spacing:0.05px;">Majestic</div>
<div class="t" style="left:1688.5px;top:710.00px;font-size:15px;color:#1f1f1f;font-weight:400;font-style:normal;letter-spacing:0.05px;">5/5/21</div>
<div class="t" style="left:1827.5px;top:710.00px;font-size:15px;color:#1f1f1f;font-weight:400;font-style:normal;letter-spacing:0.05px;">Area 01, Area 02</div>
<div class="r" style="left:20px;top:734.69px;width:2030px;height:32.38px;background:#fafbfd;border-bottom:1px solid #dcdfe2;"></div>
<div class="r" style="left:35px;top:740.87px;width:18.2px;height:18.6px;border:1.6px solid #7f8a8a;border-radius:4px;background:#fff;"></div>
<svg style="left:150px;top:739.27px" width="23" height="23" viewBox="0 0 23 23"><rect width="23" height="23" fill="#d3121f"/><path d="M11.6 12.8C10.4 10.5 8.5 6.5 8.9 4.3C9.3 2.3 12.5 2.1 12.9 4.3C13.3 6.5 12.4 10 11.6 12.8C14 11.8 17 11.8 18.4 12.6C19.8 13.4 19.6 15.6 18 16C16.2 16.4 13.6 14.2 11.6 12.8C10 14.6 7.8 15.2 5.6 16.4C3.4 17.6 3.2 19.6 4.2 20.2C5.2 20.8 7.2 20 8.4 18.4C9.6 16.8 10.8 14.8 11.6 12.8Z" fill="none" stroke="#fff" stroke-width="1.25" stroke-linejoin="round"/></svg>
<div class="t" style="left:231.5px;top:742.00px;font-size:15px;color:#1f1f1f;font-weight:400;font-style:normal;letter-spacing:0.1px;">DTTC-VL-ST-DWG-0004</div>
<div class="t" style="left:463.0px;top:742.00px;font-size:15px;color:#2a6f97;font-weight:400;font-style:normal;letter-spacing:-0.02px;">Fire and Sprinkler System</div>
<div class="t" style="left:809.5px;top:742.00px;font-size:15px;color:#1f1f1f;font-weight:400;font-style:normal;letter-spacing:0.05px;">R1</div>
<div class="t" style="left:948.3px;top:742.00px;font-size:15px;color:#1f1f1f;font-weight:400;font-style:normal;letter-spacing:0.05px;">Approved Subject to ...</div>
<div class="t" style="left:1133.5px;top:742.00px;font-size:15px;color:#1f1f1f;font-weight:400;font-style:normal;letter-spacing:0.05px;">Architectural</div>
<div class="t" style="left:1457.3px;top:742.00px;font-size:15px;color:#1f1f1f;font-weight:400;font-style:normal;letter-spacing:0.05px;">.</div>
<div class="t" style="left:1688.5px;top:742.00px;font-size:15px;color:#1f1f1f;font-weight:400;font-style:normal;letter-spacing:0.05px;">5/5/21</div>
<div class="t" style="left:1827.5px;top:742.00px;font-size:15px;color:#1f1f1f;font-weight:400;font-style:normal;letter-spacing:0.05px;">Area 01</div>
<div class="r" style="left:20px;top:767.07px;width:2030px;height:32.38px;background:#ffffff;border-bottom:1px solid #dcdfe2;"></div>
<div class="r" style="left:35px;top:773.25px;width:18.2px;height:18.6px;border:1.6px solid #7f8a8a;border-radius:4px;background:#fff;"></div>
<svg style="left:150px;top:771.65px" width="23" height="23" viewBox="0 0 23 23"><rect width="23" height="23" fill="#fdb924"/><path d="M7.5 0V23M0 15.5H23" stroke="#fff" stroke-width="1.2"/><rect x="4.5" y="12.5" width="6" height="6" fill="#fff" opacity="0.9"/></svg>
<div class="t" style="left:231.5px;top:775.00px;font-size:15px;color:#1f1f1f;font-weight:400;font-style:normal;letter-spacing:0.1px;">A-1007-DWG</div>
<div class="t" style="left:463.0px;top:775.00px;font-size:15px;color:#2a6f97;font-weight:400;font-style:normal;letter-spacing:-0.02px;">Foundation Plan</div>
<div class="t" style="left:809.5px;top:775.00px;font-size:15px;color:#1f1f1f;font-weight:400;font-style:normal;letter-spacing:0.05px;">C</div>
<div class="t" style="left:948.3px;top:775.00px;font-size:15px;color:#1f1f1f;font-weight:400;font-style:normal;letter-spacing:0.05px;">Approved</div>
<div class="t" style="left:1133.5px;top:775.00px;font-size:15px;color:#1f1f1f;font-weight:400;font-style:normal;letter-spacing:0.05px;">Architectural</div>
<div class="t" style="left:1457.3px;top:775.00px;font-size:15px;color:#1f1f1f;font-weight:400;font-style:normal;letter-spacing:0.05px;">Splice Architecture</div>
<div class="t" style="left:1688.5px;top:775.00px;font-size:15px;color:#1f1f1f;font-weight:400;font-style:normal;letter-spacing:0.05px;">5/5/21</div>
<div class="t" style="left:1827.5px;top:775.00px;font-size:15px;color:#1f1f1f;font-weight:400;font-style:normal;letter-spacing:0.05px;">Area 06</div>
<div class="r" style="left:20px;top:799.45px;width:2030px;height:32.38px;background:#fafbfd;border-bottom:1px solid #dcdfe2;"></div>
<div class="r" style="left:35px;top:805.63px;width:18.2px;height:18.6px;border:1.6px solid #7f8a8a;border-radius:4px;background:#fff;"></div>
<svg style="left:150px;top:804.03px" width="23" height="23" viewBox="0 0 23 23"><rect width="23" height="23" fill="#d3121f"/><path d="M11.6 12.8C10.4 10.5 8.5 6.5 8.9 4.3C9.3 2.3 12.5 2.1 12.9 4.3C13.3 6.5 12.4 10 11.6 12.8C14 11.8 17 11.8 18.4 12.6C19.8 13.4 19.6 15.6 18 16C16.2 16.4 13.6 14.2 11.6 12.8C10 14.6 7.8 15.2 5.6 16.4C3.4 17.6 3.2 19.6 4.2 20.2C5.2 20.8 7.2 20 8.4 18.4C9.6 16.8 10.8 14.8 11.6 12.8Z" fill="none" stroke="#fff" stroke-width="1.25" stroke-linejoin="round"/></svg>
<div class="t" style="left:231.5px;top:807.00px;font-size:15px;color:#1f1f1f;font-weight:400;font-style:normal;letter-spacing:0.1px;">HTTC-AR-DWG-1004</div>
<div class="t" style="left:463.0px;top:807.00px;font-size:15px;color:#2a6f97;font-weight:400;font-style:normal;letter-spacing:-0.02px;">Chiller installation spec</div>
<div class="t" style="left:809.5px;top:807.00px;font-size:15px;color:#1f1f1f;font-weight:400;font-style:normal;letter-spacing:0.05px;">R0</div>
<div class="t" style="left:948.3px;top:807.00px;font-size:15px;color:#1f1f1f;font-weight:400;font-style:normal;letter-spacing:0.05px;">For Review</div>
<div class="t" style="left:1133.5px;top:807.00px;font-size:15px;color:#1f1f1f;font-weight:400;font-style:normal;letter-spacing:0.05px;">Architectural</div>
<div class="t" style="left:1457.3px;top:807.00px;font-size:15px;color:#1f1f1f;font-weight:400;font-style:normal;letter-spacing:0.05px;">Majestic</div>
<div class="t" style="left:1688.5px;top:807.00px;font-size:15px;color:#1f1f1f;font-weight:400;font-style:normal;letter-spacing:0.05px;">5/5/21</div>
<div class="t" style="left:1827.5px;top:807.00px;font-size:15px;color:#1f1f1f;font-weight:400;font-style:normal;letter-spacing:0.05px;">Area 01, Area 02</div>
<div class="r" style="left:20px;top:831.83px;width:2030px;height:32.38px;background:#ffffff;border-bottom:1px solid #dcdfe2;"></div>
<div class="r" style="left:35px;top:838.01px;width:18.2px;height:18.6px;border:1.6px solid #7f8a8a;border-radius:4px;background:#fff;"></div>
<svg style="left:150px;top:836.41px" width="23" height="23" viewBox="0 0 23 23"><rect width="23" height="23" fill="#d3121f"/><path d="M11.6 12.8C10.4 10.5 8.5 6.5 8.9 4.3C9.3 2.3 12.5 2.1 12.9 4.3C13.3 6.5 12.4 10 11.6 12.8C14 11.8 17 11.8 18.4 12.6C19.8 13.4 19.6 15.6 18 16C16.2 16.4 13.6 14.2 11.6 12.8C10 14.6 7.8 15.2 5.6 16.4C3.4 17.6 3.2 19.6 4.2 20.2C5.2 20.8 7.2 20 8.4 18.4C9.6 16.8 10.8 14.8 11.6 12.8Z" fill="none" stroke="#fff" stroke-width="1.25" stroke-linejoin="round"/></svg>
<div class="t" style="left:231.5px;top:839.00px;font-size:15px;color:#1f1f1f;font-weight:400;font-style:normal;letter-spacing:0.1px;">MAJ_05052021_01</div>
<div class="t" style="left:463.0px;top:839.00px;font-size:15px;color:#2a6f97;font-weight:400;font-style:normal;letter-spacing:-0.02px;">Contract Agreement</div>
<div class="t" style="left:809.5px;top:839.00px;font-size:15px;color:#1f1f1f;font-weight:400;font-style:normal;letter-spacing:0.05px;">B</div>
<div class="t" style="left:948.3px;top:839.00px;font-size:15px;color:#1f1f1f;font-weight:400;font-style:normal;letter-spacing:0.05px;">For Approval</div>
<div class="t" style="left:1133.5px;top:839.00px;font-size:15px;color:#1f1f1f;font-weight:400;font-style:normal;letter-spacing:0.05px;">Civil</div>
<div class="t" style="left:1457.3px;top:839.00px;font-size:15px;color:#1f1f1f;font-weight:400;font-style:normal;letter-spacing:0.05px;">Majestic</div>
<div class="t" style="left:1688.5px;top:839.00px;font-size:15px;color:#1f1f1f;font-weight:400;font-style:normal;letter-spacing:0.05px;">5/5/21</div>
<div class="t" style="left:1827.5px;top:839.00px;font-size:15px;color:#1f1f1f;font-weight:400;font-style:normal;letter-spacing:0.05px;">Area 01</div>
<div class="r" style="left:20px;top:864.21px;width:2030px;height:32.38px;background:#fafbfd;border-bottom:1px solid #dcdfe2;"></div>
<div class="r" style="left:35px;top:870.39px;width:18.2px;height:18.6px;border:1.6px solid #7f8a8a;border-radius:4px;background:#fff;"></div>
<svg style="left:150px;top:868.79px" width="23" height="23" viewBox="0 0 23 23"><rect width="23" height="23" fill="#fdb924"/><path d="M7.5 0V23M0 15.5H23" stroke="#fff" stroke-width="1.2"/><rect x="4.5" y="12.5" width="6" height="6" fill="#fff" opacity="0.9"/></svg>
<div class="t" style="left:231.5px;top:872.00px;font-size:15px;color:#1f1f1f;font-weight:400;font-style:normal;letter-spacing:0.1px;">A-1006-DWG</div>
<div class="t" style="left:463.0px;top:872.00px;font-size:15px;color:#2a6f97;font-weight:400;font-style:normal;letter-spacing:-0.02px;">Foundation Plan</div>
<div class="t" style="left:809.5px;top:872.00px;font-size:15px;color:#1f1f1f;font-weight:400;font-style:normal;letter-spacing:0.05px;">C</div>
<div class="t" style="left:948.3px;top:872.00px;font-size:15px;color:#1f1f1f;font-weight:400;font-style:normal;letter-spacing:0.05px;">Approved</div>
<div class="t" style="left:1133.5px;top:872.00px;font-size:15px;color:#1f1f1f;font-weight:400;font-style:normal;letter-spacing:0.05px;">Architectural</div>
<div class="t" style="left:1457.3px;top:872.00px;font-size:15px;color:#1f1f1f;font-weight:400;font-style:normal;letter-spacing:0.05px;">Splice Architecture</div>
<div class="t" style="left:1688.5px;top:872.00px;font-size:15px;color:#1f1f1f;font-weight:400;font-style:normal;letter-spacing:0.05px;">5/5/21</div>
<div class="t" style="left:1827.5px;top:872.00px;font-size:15px;color:#1f1f1f;font-weight:400;font-style:normal;letter-spacing:0.05px;">Area 05</div>
<div class="r" style="left:20px;top:896.59px;width:2030px;height:32.38px;background:#ffffff;border-bottom:1px solid #dcdfe2;"></div>
<div class="r" style="left:35px;top:902.77px;width:18.2px;height:18.6px;border:1.6px solid #7f8a8a;border-radius:4px;background:#fff;"></div>
<svg style="left:150px;top:901.17px" width="23" height="23" viewBox="0 0 23 23"><rect width="23" height="23" fill="#d3121f"/><path d="M11.6 12.8C10.4 10.5 8.5 6.5 8.9 4.3C9.3 2.3 12.5 2.1 12.9 4.3C13.3 6.5 12.4 10 11.6 12.8C14 11.8 17 11.8 18.4 12.6C19.8 13.4 19.6 15.6 18 16C16.2 16.4 13.6 14.2 11.6 12.8C10 14.6 7.8 15.2 5.6 16.4C3.4 17.6 3.2 19.6 4.2 20.2C5.2 20.8 7.2 20 8.4 18.4C9.6 16.8 10.8 14.8 11.6 12.8Z" fill="none" stroke="#fff" stroke-width="1.25" stroke-linejoin="round"/></svg>
<svg style="left:178px;top:902.37px" width="22" height="22" viewBox="0 0 22 22"><path d="M2.4 20.5L2.4 17L16.6 2.8L20.1 6.3L5.9 20.5ZM14.2 5.2L17.7 8.7" fill="none" stroke="#707070" stroke-width="1.5" stroke-linejoin="round"/><path d="M10.8 20.3H19.8" stroke="#707070" stroke-width="1.5"/></svg>
<div class="t" style="left:231.5px;top:904.00px;font-size:15px;color:#1f1f1f;font-weight:400;font-style:normal;letter-spacing:0.1px;">S-2040</div>
<div class="t" style="left:463.0px;top:904.00px;font-size:15px;color:#2a6f97;font-weight:400;font-style:normal;letter-spacing:-0.02px;">CHANDERLIER SUPPORT DETAIL, TYPICAL</div>
<div class="t" style="left:809.5px;top:904.00px;font-size:15px;color:#1f1f1f;font-weight:400;font-style:normal;letter-spacing:0.05px;">C</div>
<div class="t" style="left:948.3px;top:904.00px;font-size:15px;color:#1f1f1f;font-weight:400;font-style:normal;letter-spacing:0.05px;">To be Produced</div>
<div class="t" style="left:1133.5px;top:904.00px;font-size:15px;color:#1f1f1f;font-weight:400;font-style:normal;letter-spacing:0.05px;">Structural</div>
<div class="t" style="left:1457.3px;top:904.00px;font-size:15px;color:#1f1f1f;font-weight:400;font-style:normal;letter-spacing:0.05px;">Majestic</div>
<div class="t" style="left:1688.5px;top:904.00px;font-size:15px;color:#1f1f1f;font-weight:400;font-style:normal;letter-spacing:0.05px;">5/5/21</div>
<div class="t" style="left:1827.5px;top:904.00px;font-size:15px;color:#1f1f1f;font-weight:400;font-style:normal;letter-spacing:0.05px;">Area 03</div>
<div class="r" style="left:20px;top:928.97px;width:2030px;height:32.38px;background:#fafbfd;border-bottom:1px solid #dcdfe2;"></div>
<div class="r" style="left:35px;top:935.15px;width:18.2px;height:18.6px;border:1.6px solid #7f8a8a;border-radius:4px;background:#fff;"></div>
<svg style="left:150px;top:933.55px" width="23" height="23" viewBox="0 0 23 23"><rect width="23" height="23" fill="#d3121f"/><path d="M11.6 12.8C10.4 10.5 8.5 6.5 8.9 4.3C9.3 2.3 12.5 2.1 12.9 4.3C13.3 6.5 12.4 10 11.6 12.8C14 11.8 17 11.8 18.4 12.6C19.8 13.4 19.6 15.6 18 16C16.2 16.4 13.6 14.2 11.6 12.8C10 14.6 7.8 15.2 5.6 16.4C3.4 17.6 3.2 19.6 4.2 20.2C5.2 20.8 7.2 20 8.4 18.4C9.6 16.8 10.8 14.8 11.6 12.8Z" fill="none" stroke="#fff" stroke-width="1.25" stroke-linejoin="round"/></svg>
<div class="t" style="left:231.5px;top:936.00px;font-size:15px;color:#1f1f1f;font-weight:400;font-style:normal;letter-spacing:0.1px;">ENZ-EL-DRW-0005</div>
<div class="t" style="left:463.0px;top:936.00px;font-size:15px;color:#2a6f97;font-weight:400;font-style:normal;letter-spacing:-0.02px;">Ground Fl Power &amp; Comms Layout Sheet 1</div>
<div class="t" style="left:809.5px;top:936.00px;font-size:15px;color:#1f1f1f;font-weight:400;font-style:normal;letter-spacing:0.05px;">0</div>
<div class="t" style="left:948.3px;top:936.00px;font-size:15px;color:#1f1f1f;font-weight:400;font-style:normal;letter-spacing:0.05px;">For Construction</div>
<div class="t" style="left:1133.5px;top:936.00px;font-size:15px;color:#1f1f1f;font-weight:400;font-style:normal;letter-spacing:0.05px;">Electrical</div>
<div class="t" style="left:1457.3px;top:936.00px;font-size:15px;color:#1f1f1f;font-weight:400;font-style:normal;letter-spacing:0.05px;">Majestic</div>
<div class="t" style="left:1688.5px;top:936.00px;font-size:15px;color:#1f1f1f;font-weight:400;font-style:normal;letter-spacing:0.05px;">5/5/21</div>
<div class="t" style="left:1827.5px;top:936.00px;font-size:15px;color:#1f1f1f;font-weight:400;font-style:normal;letter-spacing:0.05px;">Area 03, Area 04, Area 06</div>
<div class="r" style="left:20px;top:961.35px;width:2030px;height:32.38px;background:#ffffff;border-bottom:1px solid #dcdfe2;"></div>
<div class="r" style="left:35px;top:967.53px;width:18.2px;height:18.6px;border:1.6px solid #7f8a8a;border-radius:4px;background:#fff;"></div>
<svg style="left:150px;top:965.93px" width="23" height="23" viewBox="0 0 23 23"><rect width="23" height="23" fill="#d3121f"/><path d="M11.6 12.8C10.4 10.5 8.5 6.5 8.9 4.3C9.3 2.3 12.5 2.1 12.9 4.3C13.3 6.5 12.4 10 11.6 12.8C14 11.8 17 11.8 18.4 12.6C19.8 13.4 19.6 15.6 18 16C16.2 16.4 13.6 14.2 11.6 12.8C10 14.6 7.8 15.2 5.6 16.4C3.4 17.6 3.2 19.6 4.2 20.2C5.2 20.8 7.2 20 8.4 18.4C9.6 16.8 10.8 14.8 11.6 12.8Z" fill="none" stroke="#fff" stroke-width="1.25" stroke-linejoin="round"/></svg>
<div class="t" style="left:231.5px;top:969.00px;font-size:15px;color:#1f1f1f;font-weight:400;font-style:normal;letter-spacing:0.1px;">ENZ-EL-DRW-0003</div>
<div class="t" style="left:463.0px;top:969.00px;font-size:15px;color:#2a6f97;font-weight:400;font-style:normal;letter-spacing:-0.02px;">Ground Fl High Level Lighting Layout Sheet 1</div>
<div class="t" style="left:809.5px;top:969.00px;font-size:15px;color:#1f1f1f;font-weight:400;font-style:normal;letter-spacing:0.05px;">0</div>
<div class="t" style="left:948.3px;top:969.00px;font-size:15px;color:#1f1f1f;font-weight:400;font-style:normal;letter-spacing:0.05px;">For Construction</div>
<div class="t" style="left:1133.5px;top:969.00px;font-size:15px;color:#1f1f1f;font-weight:400;font-style:normal;letter-spacing:0.05px;">Electrical</div>
<div class="t" style="left:1457.3px;top:969.00px;font-size:15px;color:#1f1f1f;font-weight:400;font-style:normal;letter-spacing:0.05px;">Majestic</div>
<div class="t" style="left:1688.5px;top:969.00px;font-size:15px;color:#1f1f1f;font-weight:400;font-style:normal;letter-spacing:0.05px;">5/5/21</div>
<div class="t" style="left:1827.5px;top:969.00px;font-size:15px;color:#1f1f1f;font-weight:400;font-style:normal;letter-spacing:0.05px;">Area 03, Area 04, Area 06</div>
<div class="r" style="left:20px;top:993.73px;width:2030px;height:32.38px;background:#fafbfd;border-bottom:1px solid #dcdfe2;"></div>
<div class="r" style="left:35px;top:999.91px;width:18.2px;height:18.6px;border:1.6px solid #7f8a8a;border-radius:4px;background:#fff;"></div>
<svg style="left:150px;top:998.31px" width="23" height="23" viewBox="0 0 23 23"><rect width="23" height="23" fill="#d3121f"/><path d="M11.6 12.8C10.4 10.5 8.5 6.5 8.9 4.3C9.3 2.3 12.5 2.1 12.9 4.3C13.3 6.5 12.4 10 11.6 12.8C14 11.8 17 11.8 18.4 12.6C19.8 13.4 19.6 15.6 18 16C16.2 16.4 13.6 14.2 11.6 12.8C10 14.6 7.8 15.2 5.6 16.4C3.4 17.6 3.2 19.6 4.2 20.2C5.2 20.8 7.2 20 8.4 18.4C9.6 16.8 10.8 14.8 11.6 12.8Z" fill="none" stroke="#fff" stroke-width="1.25" stroke-linejoin="round"/></svg>
<div class="t" style="left:231.5px;top:1001.00px;font-size:15px;color:#1f1f1f;font-weight:400;font-style:normal;letter-spacing:0.1px;">ENZ-EL-DRW-0004</div>
<div class="t" style="left:463.0px;top:1001.00px;font-size:15px;color:#2a6f97;font-weight:400;font-style:normal;letter-spacing:-0.02px;">Ground Fl High Level Lighting Layout Sheet 2</div>
<div class="t" style="left:809.5px;top:1001.00px;font-size:15px;color:#1f1f1f;font-weight:400;font-style:normal;letter-spacing:0.05px;">0</div>
<div class="t" style="left:948.3px;top:1001.00px;font-size:15px;color:#1f1f1f;font-weight:400;font-style:normal;letter-spacing:0.05px;">For Construction</div>
<div class="t" style="left:1133.5px;top:1001.00px;font-size:15px;color:#1f1f1f;font-weight:400;font-style:normal;letter-spacing:0.05px;">Electrical</div>
<div class="t" style="left:1457.3px;top:1001.00px;font-size:15px;color:#1f1f1f;font-weight:400;font-style:normal;letter-spacing:0.05px;">Majestic</div>
<div class="t" style="left:1688.5px;top:1001.00px;font-size:15px;color:#1f1f1f;font-weight:400;font-style:normal;letter-spacing:0.05px;">5/5/21</div>
<div class="t" style="left:1827.5px;top:1001.00px;font-size:15px;color:#1f1f1f;font-weight:400;font-style:normal;letter-spacing:0.05px;">Area 05</div>
<div class="r" style="left:20px;top:1026.11px;width:2030px;height:32.38px;background:#ffffff;border-bottom:1px solid #dcdfe2;"></div>
<div class="r" style="left:35px;top:1032.29px;width:18.2px;height:18.6px;border:1.6px solid #7f8a8a;border-radius:4px;background:#fff;"></div>
<svg style="left:150px;top:1030.69px" width="23" height="23" viewBox="0 0 23 23"><rect width="23" height="23" fill="#d3121f"/><path d="M11.6 12.8C10.4 10.5 8.5 6.5 8.9 4.3C9.3 2.3 12.5 2.1 12.9 4.3C13.3 6.5 12.4 10 11.6 12.8C14 11.8 17 11.8 18.4 12.6C19.8 13.4 19.6 15.6 18 16C16.2 16.4 13.6 14.2 11.6 12.8C10 14.6 7.8 15.2 5.6 16.4C3.4 17.6 3.2 19.6 4.2 20.2C5.2 20.8 7.2 20 8.4 18.4C9.6 16.8 10.8 14.8 11.6 12.8Z" fill="none" stroke="#fff" stroke-width="1.25" stroke-linejoin="round"/></svg>
<svg style="left:178px;top:1031.89px" width="22" height="22" viewBox="0 0 22 22"><path d="M2.4 20.5L2.4 17L16.6 2.8L20.1 6.3L5.9 20.5ZM14.2 5.2L17.7 8.7" fill="none" stroke="#707070" stroke-width="1.5" stroke-linejoin="round"/><path d="M10.8 20.3H19.8" stroke="#707070" stroke-width="1.5"/></svg>
<div class="t" style="left:231.5px;top:1034.00px;font-size:15px;color:#1f1f1f;font-weight:400;font-style:normal;letter-spacing:0.1px;">S-2041</div>
<div class="t" style="left:463.0px;top:1034.00px;font-size:15px;color:#2a6f97;font-weight:400;font-style:normal;letter-spacing:-0.02px;">Curtain Wall Support &amp; Fixing Detail</div>
<div class="t" style="left:809.5px;top:1034.00px;font-size:15px;color:#1f1f1f;font-weight:400;font-style:normal;letter-spacing:0.05px;">C</div>
<div class="t" style="left:948.3px;top:1034.00px;font-size:15px;color:#1f1f1f;font-weight:400;font-style:normal;letter-spacing:0.05px;">Approved</div>
<div class="t" style="left:1133.5px;top:1034.00px;font-size:15px;color:#1f1f1f;font-weight:400;font-style:normal;letter-spacing:0.05px;">Structural</div>
<div class="t" style="left:1457.3px;top:1034.00px;font-size:15px;color:#1f1f1f;font-weight:400;font-style:normal;letter-spacing:0.05px;">Majestic</div>
<div class="t" style="left:1688.5px;top:1034.00px;font-size:15px;color:#1f1f1f;font-weight:400;font-style:normal;letter-spacing:0.05px;">5/5/21</div>
<div class="t" style="left:1827.5px;top:1034.00px;font-size:15px;color:#1f1f1f;font-weight:400;font-style:normal;letter-spacing:0.05px;">Area 03</div>
<div class="r" style="left:20px;top:1058.49px;width:2030px;height:32.38px;background:#fafbfd;border-bottom:1px solid #dcdfe2;"></div>
<div class="r" style="left:35px;top:1064.67px;width:18.2px;height:18.6px;border:1.6px solid #7f8a8a;border-radius:4px;background:#fff;"></div>
<svg style="left:150px;top:1063.07px" width="23" height="23" viewBox="0 0 23 23"><rect width="23" height="23" fill="#d3121f"/><path d="M11.6 12.8C10.4 10.5 8.5 6.5 8.9 4.3C9.3 2.3 12.5 2.1 12.9 4.3C13.3 6.5 12.4 10 11.6 12.8C14 11.8 17 11.8 18.4 12.6C19.8 13.4 19.6 15.6 18 16C16.2 16.4 13.6 14.2 11.6 12.8C10 14.6 7.8 15.2 5.6 16.4C3.4 17.6 3.2 19.6 4.2 20.2C5.2 20.8 7.2 20 8.4 18.4C9.6 16.8 10.8 14.8 11.6 12.8Z" fill="none" stroke="#fff" stroke-width="1.25" stroke-linejoin="round"/></svg>
<div class="t" style="left:231.5px;top:1066.00px;font-size:15px;color:#1f1f1f;font-weight:400;font-style:normal;letter-spacing:0.1px;">S-2037</div>
<div class="t" style="left:463.0px;top:1066.00px;font-size:15px;color:#2a6f97;font-weight:400;font-style:normal;letter-spacing:-0.02px;">Stair Balustrade Details</div>
<div class="t" style="left:809.5px;top:1066.00px;font-size:15px;color:#1f1f1f;font-weight:400;font-style:normal;letter-spacing:0.05px;">C</div>
<div class="t" style="left:948.3px;top:1066.00px;font-size:15px;color:#1f1f1f;font-weight:400;font-style:normal;letter-spacing:0.05px;">To be Produced</div>
<div class="t" style="left:1133.5px;top:1066.00px;font-size:15px;color:#1f1f1f;font-weight:400;font-style:normal;letter-spacing:0.05px;">Structural</div>
<div class="t" style="left:1457.3px;top:1066.00px;font-size:15px;color:#1f1f1f;font-weight:400;font-style:normal;letter-spacing:0.05px;">Majestic</div>
<div class="t" style="left:1688.5px;top:1066.00px;font-size:15px;color:#1f1f1f;font-weight:400;font-style:normal;letter-spacing:0.05px;">5/5/21</div>
<div class="t" style="left:1827.5px;top:1066.00px;font-size:15px;color:#1f1f1f;font-weight:400;font-style:normal;letter-spacing:0.05px;">Area 03</div>
<div class="r" style="left:20px;top:1090.87px;width:2030px;height:32.38px;background:#ffffff;border-bottom:1px solid #dcdfe2;"></div>
<div class="r" style="left:35px;top:1097.05px;width:18.2px;height:18.6px;border:1.6px solid #7f8a8a;border-radius:4px;background:#fff;"></div>
<svg style="left:150px;top:1095.45px" width="23" height="23" viewBox="0 0 23 23"><rect width="23" height="23" fill="#d3121f"/><path d="M11.6 12.8C10.4 10.5 8.5 6.5 8.9 4.3C9.3 2.3 12.5 2.1 12.9 4.3C13.3 6.5 12.4 10 11.6 12.8C14 11.8 17 11.8 18.4 12.6C19.8 13.4 19.6 15.6 18 16C16.2 16.4 13.6 14.2 11.6 12.8C10 14.6 7.8 15.2 5.6 16.4C3.4 17.6 3.2 19.6 4.2 20.2C5.2 20.8 7.2 20 8.4 18.4C9.6 16.8 10.8 14.8 11.6 12.8Z" fill="none" stroke="#fff" stroke-width="1.25" stroke-linejoin="round"/></svg>
<div class="t" style="left:231.5px;top:1098.00px;font-size:15px;color:#1f1f1f;font-weight:400;font-style:normal;letter-spacing:0.1px;">S-2038</div>
<div class="t" style="left:463.0px;top:1098.00px;font-size:15px;color:#2a6f97;font-weight:400;font-style:normal;letter-spacing:-0.02px;">Balustrade Support Details</div>
<div class="t" style="left:809.5px;top:1098.00px;font-size:15px;color:#1f1f1f;font-weight:400;font-style:normal;letter-spacing:0.05px;">C</div>
<div class="t" style="left:948.3px;top:1098.00px;font-size:15px;color:#1f1f1f;font-weight:400;font-style:normal;letter-spacing:0.05px;">To be Produced</div>
<div class="t" style="left:1133.5px;top:1098.00px;font-size:15px;color:#1f1f1f;font-weight:400;font-style:normal;letter-spacing:0.05px;">Structural</div>
<div class="t" style="left:1457.3px;top:1098.00px;font-size:15px;color:#1f1f1f;font-weight:400;font-style:normal;letter-spacing:0.05px;">Majestic</div>
<div class="t" style="left:1688.5px;top:1098.00px;font-size:15px;color:#1f1f1f;font-weight:400;font-style:normal;letter-spacing:0.05px;">5/5/21</div>
<div class="t" style="left:1827.5px;top:1098.00px;font-size:15px;color:#1f1f1f;font-weight:400;font-style:normal;letter-spacing:0.05px;">Area 03</div>
<div class="r" style="left:446px;top:405px;width:2px;height:708px;background:#c9cdd2;"></div>
<div class="r" style="left:20px;top:1107px;width:2030px;height:2px;background:#c3c7cb;"></div>
<div class="r" style="left:20px;top:1109px;width:2030px;height:4px;background:#f6f4f0;"></div>
<div class="r" style="left:0px;top:1113px;width:2057px;height:7px;background:#2c6341;"></div>
<div class="r" style="left:2050px;top:0px;width:7px;height:1120px;background:#2c6341;"></div>

</body></html>
